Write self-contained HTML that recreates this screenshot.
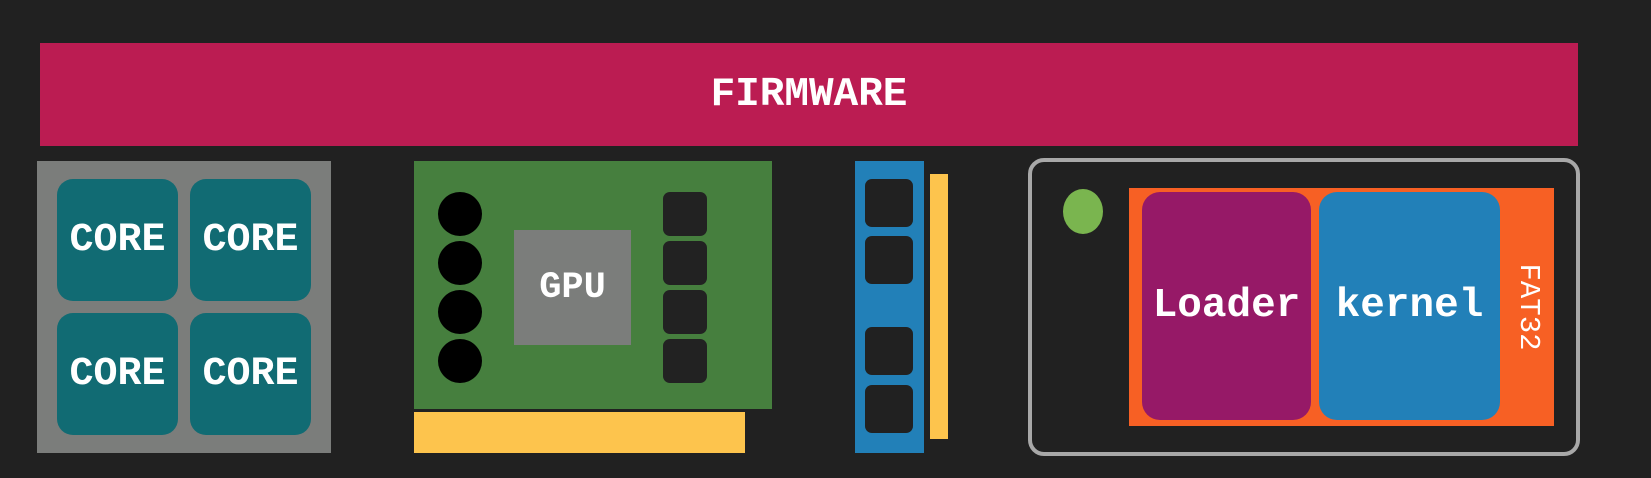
<!DOCTYPE html>
<html><head><style>
body{margin:0;width:1651px;height:478px;background:#212121;position:relative;overflow:hidden;font-family:"Liberation Mono",monospace;}
div{position:absolute;box-sizing:border-box}
.t{color:#fff;font-weight:bold;display:flex;align-items:center;justify-content:center}
.core{background:#116b73;border-radius:16px;width:121px;height:122px;font-size:40px}
.c{background:#000;border-radius:50%;width:44px;height:44px;left:438px}
.sq{background:#222;border-radius:7px;width:44px;height:44px;left:663px}
.rs{background:#212121;border-radius:7px;width:48px;height:48px;left:865px}
</style></head><body>
<div class="t" style="left:40px;top:43px;width:1538px;height:103px;background:#bb1c52;font-size:41px">FIRMWARE</div>

<div style="left:37px;top:161px;width:294px;height:292px;background:#7b7d7b"></div>
<div class="t core" style="left:57px;top:179px">CORE</div>
<div class="t core" style="left:190px;top:179px">CORE</div>
<div class="t core" style="left:57px;top:313px">CORE</div>
<div class="t core" style="left:190px;top:313px">CORE</div>

<div style="left:414px;top:161px;width:358px;height:248px;background:#467f3e"></div>
<div style="left:414px;top:412px;width:331px;height:41px;background:#fdc44d"></div>
<div class="c" style="top:192px"></div>
<div class="c" style="top:241px"></div>
<div class="c" style="top:290px"></div>
<div class="c" style="top:339px"></div>
<div class="sq" style="top:192px"></div>
<div class="sq" style="top:241px"></div>
<div class="sq" style="top:290px"></div>
<div class="sq" style="top:339px"></div>
<div class="t" style="left:514px;top:230px;width:117px;height:115px;background:#7b7d7b;font-size:37px">GPU</div>

<div style="left:855px;top:161px;width:69px;height:292px;background:#2280b8"></div>
<div class="rs" style="top:179px"></div>
<div class="rs" style="top:236px"></div>
<div class="rs" style="top:327px"></div>
<div class="rs" style="top:385px"></div>
<div style="left:930px;top:174px;width:18px;height:265px;background:#fdc44d"></div>

<div style="left:1028px;top:158px;width:552px;height:298px;border:4px solid #a8a8a8;border-radius:16px"></div>
<div style="left:1063px;top:189px;width:40px;height:45px;border-radius:50%;background:#7ab54f"></div>
<div style="left:1129px;top:188px;width:425px;height:238px;background:#f76024"></div>
<div class="t" style="left:1142px;top:192px;width:169px;height:228px;background:#961967;border-radius:18px;font-size:41px">Loader</div>
<div class="t" style="left:1319px;top:192px;width:181px;height:228px;background:#2280b8;border-radius:18px;font-size:41px">kernel</div>
<div style="left:1478px;top:290px;width:100px;height:34px;color:#fff;font-size:29px;line-height:34px;text-align:center;transform:rotate(90deg)">FAT32</div>
</body></html>
